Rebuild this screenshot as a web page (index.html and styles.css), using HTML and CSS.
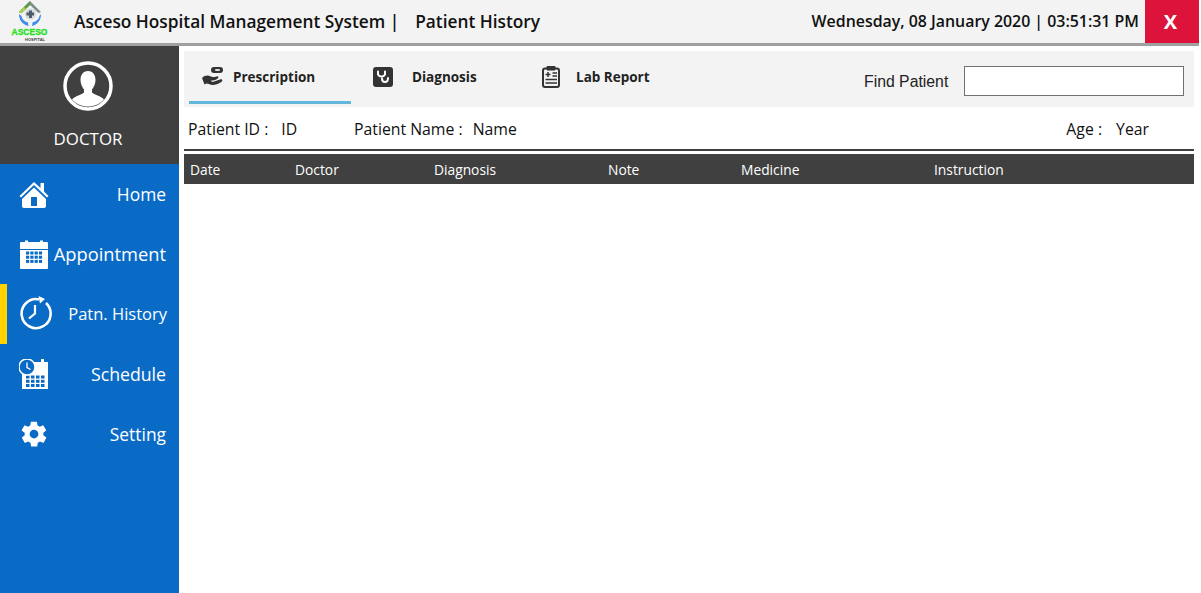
FILE: index.html
```html
<!DOCTYPE html>
<html lang="en">
<head>
<meta charset="utf-8">
<title>Patient History</title>
<link rel="stylesheet" href="styles.css">
</head>
<body>
<header class="topbar">
  <svg class="logo" viewBox="0 0 40 42" width="40" height="42">
    <path d="M9 11 L20 0 L31 11 L28.500 12 L20 4 L11.500 12Z" fill="#7c8c88"/>
    <path d="M9 11 L20 0 L20 4 L11.500 12Z" fill="#5f9a4a"/>
    <path d="M9 11 L14 6 L16 8 L11.500 12Z" fill="#a5d645"/>
    <circle cx="20.500" cy="13" r="5.500" fill="#d5dade"/>
    <path d="M19 9.500h3v2h2v3h-2v2.500h-3v-2.500h-2.500v-3h2.500z" fill="#4c5c6a"/>
    <path d="M9 13 C9 19 12 23 18.500 25 L18 21.500 C14 20.500 12 18 11.500 15Z M31 13 C31 19 28 23 22 25 L22.500 21.500 C26.500 20.500 29 18 29.500 15Z" fill="#3a8ee6"/>
    <text x="19.500" y="34" class="logo-name">ASCESO</text>
    <text x="25" y="39.500" class="logo-sub">HOSPITAL</text>
  </svg>
  <h1 class="title">Asceso Hospital Management System |<span class="page">Patient History</span></h1>
  <div class="clock">Wednesday, 08 January 2020 | 03:51:31 PM</div>
  <button class="close">X</button>
</header>
<div class="shell">
  <aside class="sidebar">
    <div class="profile">
      <svg class="avatar" viewBox="0 0 50 50" width="50" height="50">
        <circle cx="25" cy="25" r="23" fill="none" stroke="#fff" stroke-width="3.500"/>
        <path d="M25 10c5 0 7.500 4 7.500 9 0 4-2 7.500-3.500 9.500v3c2 2 9 3.500 12 7-4 4.500-10 7-16 7s-12-2.500-16-7c3-3.500 10-5 12-7v-3c-1.500-2-3.500-5.500-3.500-9.500 0-5 2.500-9 7.500-9z" fill="#fff"/>
      </svg>
      <div class="role">DOCTOR</div>
    </div>
    <nav class="menu">
      <a class="item home">
        <svg viewBox="0 0 30 30" width="30" height="30"><path d="M15 3 0.500 17l1.500 1.500L15 6 28 18.500l1.500-1.500-4.500-4.500V4h-3.500v5z" fill="#fff"/><path d="M15 8.500 3 20v7c0 1.200.8 2 2 2h20c1.200 0 2-.8 2-2v-7zM12 18h6v9h-6z" fill="#fff" fill-rule="evenodd"/></svg>
        <span>Home</span>
      </a>
      <a class="item appt">
        <svg viewBox="0 0 30 30" width="30" height="30"><path d="M2 3h4V1.500h3V3h12V1.500h3V3h4a1 1 0 0 1 1 1v6H1V4a1 1 0 0 1 1-1z" fill="#fff"/><path d="M1 11h28v18a1 1 0 0 1-1 1H2a1 1 0 0 1-1-1z" fill="#fff"/><g fill="#0a6bc7"><rect x="7" y="12.500" width="3.200" height="3"/><rect x="11.300" y="12.500" width="3.200" height="3"/><rect x="15.600" y="12.500" width="3.200" height="3"/><rect x="19.900" y="12.500" width="3.200" height="3"/><rect x="7" y="16.700" width="3.200" height="3"/><rect x="11.300" y="16.700" width="3.200" height="3"/><rect x="15.600" y="16.700" width="3.200" height="3"/><rect x="19.900" y="16.700" width="3.200" height="3"/><rect x="7" y="20.900" width="3.200" height="3"/><rect x="11.300" y="20.900" width="3.200" height="3"/><rect x="15.600" y="20.900" width="3.200" height="3"/><rect x="19.900" y="20.900" width="3.200" height="3"/></g></svg>
        <span>Appointment</span>
      </a>
      <a class="item active">
        <svg viewBox="0 0 34 34" width="34" height="34" fill="none" stroke="#fff" stroke-width="2.600"><path d="M20 3.400A14.500 14.500 0 1 0 27 7"/><path d="M16 9v8.500l-6 5" stroke-width="2.200"/><path d="M19.500 0l6.500 3-5 4.500z" fill="#fff" stroke="none"/></svg>
        <span>Patn. History</span>
      </a>
      <a class="item sched">
        <svg viewBox="0 0 30 30" width="30" height="30"><path d="M8 3h14V0h3v3h4v27H3V14h5z" fill="#fff"/><g fill="#0a6bc7"><rect x="7" y="16.500" width="3.500" height="3"/><rect x="12" y="16.500" width="3.500" height="3"/><rect x="17" y="16.500" width="3.500" height="3"/><rect x="22" y="16.500" width="3.500" height="3"/><rect x="7" y="20.800" width="3.500" height="3"/><rect x="12" y="20.800" width="3.500" height="3"/><rect x="17" y="20.800" width="3.500" height="3"/><rect x="22" y="20.800" width="3.500" height="3"/><rect x="7" y="25" width="3.500" height="3"/><rect x="12" y="25" width="3.500" height="3"/><rect x="17" y="25" width="3.500" height="3"/><rect x="22" y="25" width="3.500" height="3"/></g><circle cx="8" cy="8" r="8" fill="#0a6bc7" stroke="#fff" stroke-width="1.500"/><path d="M8 3.500v5l3.500 2" stroke="#fff" stroke-width="1.300" fill="none"/></svg>
        <span>Schedule</span>
      </a>
      <a class="item set">
        <svg viewBox="0 0 24 24" width="30" height="30"><path fill="#fff" fill-rule="evenodd" d="M19.400 13c.1-.3.100-.7.100-1s0-.7-.1-1l2.100-1.600c.2-.2.200-.4.100-.6l-2-3.500c-.1-.2-.4-.3-.6-.2l-2.500 1c-.5-.4-1.100-.7-1.700-1l-.4-2.600c0-.3-.2-.4-.5-.4h-4c-.2 0-.5.100-.5.400l-.4 2.600c-.6.300-1.200.6-1.700 1l-2.500-1c-.2-.1-.5 0-.6.200l-2 3.500c-.1.200-.1.400.1.600L4.600 11c0 .3-.1.700-.1 1s0 .7.100 1l-2.100 1.600c-.2.200-.2.400-.1.600l2 3.500c.1.200.4.300.6.200l2.500-1c.5.400 1.100.7 1.700 1l.4 2.600c0 .3.300.4.500.4h4c.3 0 .5-.1.500-.4l.4-2.600c.6-.3 1.200-.6 1.700-1l2.500 1c.2.100.5 0 .6-.2l2-3.500c.1-.2.100-.4-.1-.6zM12 15.500a3.500 3.500 0 1 1 0-7 3.500 3.500 0 0 1 0 7z"/></svg>
        <span>Setting</span>
      </a>
    </nav>
  </aside>
  <main class="content">
    <div class="toolbar">
      <div class="tab tab-first">
        <svg viewBox="0 0 24 20" width="24" height="20"><rect x="10" y="0" width="12" height="6" rx="3" fill="#333"/><rect x="14" y="2" width="5" height="2" rx="1" fill="#ddd"/><path fill="#333" d="M1 11c3-3 6-3 9-1.500 2 1 5 .5 6.500-.5l1 1.500c-1 2-4 3-6 3s-2 .5 0 1.500l9-3 1 2c-3 2.500-7 4-10 4-2 0-4-1.500-6-1.500l-2 1z"/></svg>
        <span>Prescription</span>
      </div>
      <div class="tab tab-second">
        <svg viewBox="0 0 20 20" width="20" height="20"><rect width="20" height="20" rx="3" fill="#333"/><path d="M5 4.500v3a4 4 0 0 0 7 0v-3M9 11.500c0 2 1 3.500 3 3.500s3-1.500 3-4" stroke="#fff" stroke-width="2" fill="none" stroke-linecap="round"/></svg>
        <span>Diagnosis</span>
      </div>
      <div class="tab tab-third">
        <svg viewBox="0 0 18 22" width="18" height="22" fill="none" stroke="#333"><rect x="1" y="2.500" width="16" height="18.500" rx="2" stroke-width="2"/><path d="M5 0.500h8v3.500H5z" fill="#333"/><path d="M3.500 8.500h5M6 6v5M10.500 7h4.500M10.500 10h4.500M3.500 13.500h11.500M3.500 17h11.500" stroke-width="1.500"/></svg>
        <span>Lab Report</span>
      </div>
      <label class="find">Find Patient</label>
      <input class="search" type="text">
    </div>
    <div class="patient">
      <span class="pid">Patient ID :<span class="val-id">ID</span></span>
      <span class="pname">Patient Name :<span class="val-name">Name</span></span>
      <span class="age">Age :<span class="val-age">Year</span></span>
    </div>
    <div class="table-head">
      <span>Date</span>
      <span>Doctor</span>
      <span>Diagnosis</span>
      <span>Note</span>
      <span>Medicine</span>
      <span>Instruction</span>
    </div>
  </main>
</div>
</body>
</html>
```

FILE: styles.css
```css
* { box-sizing: border-box; }
html, body { margin: 0; height: 100%; }
body {
  width: 1199px;
  font-family: "Open Sans", "Noto Sans", sans-serif;
  color: #111;
  background: #fff;
  overflow: hidden;
}
.topbar {
  height: 46px;
  display: flex;
  align-items: flex-start;
  background: #f3f3f3;
  border-bottom: 3px solid #a0a0a0;
}
.logo { margin: 1px 0 0 10px; flex: none; }
.logo-name { font: 900 8.500px "Liberation Sans", sans-serif; fill: #22e022; stroke: #22e022; stroke-width: .3px; text-anchor: middle; }
.logo-sub { font: 700 4px "Liberation Sans", sans-serif; fill: #444; text-anchor: middle; }
.title {
  margin: 11px 0 0 24px;
  font-size: 17.300px;
  line-height: 22px;
  font-weight: 600;
  white-space: pre;
}
.page { margin-left: 16px; }
.clock {
  margin: 11px 0 0 auto;
  font-size: 15.900px;
  line-height: 20px;
  font-weight: 600;
  white-space: nowrap;
}
.close {
  width: 54px;
  height: 43px;
  margin-left: 6px;
  border: 0;
  padding: 0 3px 0 0;
  background: #dc143c;
  color: #fff;
  font: 700 20px "Open Sans", sans-serif;
}
.shell { display: flex; height: 547px; }
.sidebar { width: 179px; flex: none; background: #0a6bc7; }
.profile {
  height: 118px;
  background: #404040;
  color: #fff;
  display: flex;
  flex-direction: column;
  align-items: center;
  padding: 15px 3px 0 0;
}
.role { margin-top: 16px; font-size: 16.900px; line-height: 24px; }
.menu { display: flex; flex-direction: column; }
.item {
  height: 60px;
  display: flex;
  align-items: center;
  justify-content: space-between;
  padding: 0 13px 0 19px;
  color: #fff;
  font-size: 17.400px;
}
.appt { font-size: 18.300px; padding-bottom: 1px; }
.sched { font-size: 17.700px; }
.item.active { border-left: 7px solid #ffd200; padding: 0 12px 2px 12px; font-size: 16.500px; }
.content { flex: 1; padding: 5px 5px 0 5px; }
.toolbar {
  height: 56px;
  background: #f3f3f3;
  display: flex;
  align-items: flex-start;
  padding-left: 5px;
}
.tab {
  height: 53px;
  display: flex;
  align-items: center;
  padding-top: 2px;
  font-size: 13.500px;
  font-weight: 700;
  color: #222;
  border-bottom: 3px solid transparent;
}
.tab-first { width: 162px; padding-left: 12px; gap: 8px; border-bottom-color: #62b8dc; }
.tab-second { width: 168px; padding-left: 22px; gap: 19px; }
.tab-third { width: 345px; gap: 16px; padding-left: 23px; }
.find { font: 15.800px/20px "Liberation Sans", sans-serif; color: #222; margin-top: 21px; }
.search {
  width: 220px;
  height: 30px;
  margin: 15px 0 0 16px;
  border: 1px solid #707070;
  background: #fff;
}
.patient {
  height: 44px;
  display: flex;
  align-items: center;
  padding: 2px 0 0 4px;
  font-size: 15.800px;
  border-bottom: 2px solid #404040;
}
.pid { width: 166px; }
.val-id { margin-left: 13px; }
.val-name { margin-left: 10px; }
.val-age { margin-left: 14px; }
.age { margin-left: auto; margin-right: 45px; }
.table-head {
  height: 30px;
  margin-top: 3px;
  background: #404040;
  color: #fff;
  font-size: 13.800px;
  display: grid;
  grid-template-columns: 105px 139px 174px 133px 193px 1fr;
  align-items: center;
  padding-left: 6px;
}
```
